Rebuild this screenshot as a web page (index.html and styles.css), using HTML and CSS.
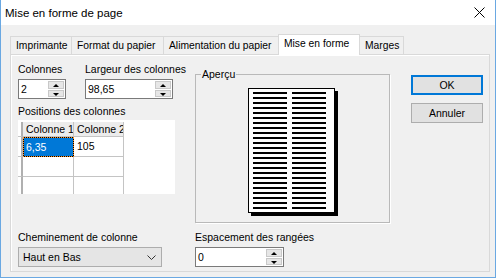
FILE: index.html
```html
<!DOCTYPE html>
<html lang="fr">
<head>
  <meta charset="UTF-8">
  <title>Mise en forme de page</title>
  <link rel="stylesheet" href="styles.css">
</head>
<body>

<div class="window">
  <div class="titlebar">
    <span class="title">Mise en forme de page</span>
    <svg class="close" width="11" height="11" viewBox="0 0 11 11">
      <path d="M0.5 0.5 L10.5 10.5 M10.5 0.5 L0.5 10.5" stroke="#000" stroke-width="1" fill="none"/>
    </svg>
  </div>

  <div class="client">
    <div class="tabs">
      <div class="tab tab-imprimante">Imprimante</div>
      <div class="tab tab-format">Format du papier</div>
      <div class="tab tab-alim">Alimentation du papier</div>
      <div class="tab tab-mise active">Mise en forme</div>
      <div class="tab tab-marges">Marges</div>
    </div>

    <div class="panel">
      <!-- colonne gauche -->
      <div class="col-left">
        <div class="field-row">
          <div class="field">
            <div class="label">Colonnes</div>
            <div class="spinner spin-cols">
              <span class="value">2</span>
              <div class="spin-btns"><span class="up"></span><span class="down"></span></div>
            </div>
          </div>
          <div class="field">
            <div class="label">Largeur des colonnes</div>
            <div class="spinner spin-width">
              <span class="value">98,65</span>
              <div class="spin-btns"><span class="up"></span><span class="down"></span></div>
            </div>
          </div>
        </div>

        <div class="label label-positions">Positions des colonnes</div>
        <div class="grid-box">
          <div class="grid-table">
            <div class="corner"></div>
            <div class="head">Colonne 1</div>
            <div class="head">Colonne 2</div>

            <div class="rowhead"></div>
            <div class="cell selected">6,35</div>
            <div class="cell">105</div>

            <div class="rowhead"></div>
            <div class="cell"></div>
            <div class="cell"></div>

            <div class="rowhead"></div>
            <div class="cell"></div>
            <div class="cell"></div>
          </div>
        </div>
      </div>

      <!-- aperçu -->
      <fieldset class="preview">
        <legend>Aperçu</legend>
        <svg class="page" width="90" height="128" viewBox="0 0 90 128" shape-rendering="crispEdges">
          <defs>
            <pattern id="rows" x="0" y="4" width="5" height="5" patternUnits="userSpaceOnUse">
              <rect x="0" y="0" width="5" height="2" fill="#000"/>
            </pattern>
          </defs>
          <rect x="3" y="3" width="87" height="125" fill="#000"/>
          <rect x="0.5" y="0.5" width="86" height="124" fill="#fff" stroke="#000"/>
          <rect x="5" y="4" width="34" height="120" fill="url(#rows)"/>
          <rect x="44" y="4" width="34" height="120" fill="url(#rows)"/>
        </svg>
      </fieldset>

      <!-- boutons -->
      <div class="buttons">
        <div class="btn btn-default">OK</div>
        <div class="btn">Annuler</div>
      </div>

      <div class="field">
        <div class="label">Cheminement de colonne</div>
        <div class="combo">
          <span class="value">Haut en Bas</span>
          <svg class="chevron" width="9" height="5" viewBox="0 0 9 5">
            <path d="M0.5 0.5 L4.5 4.5 L8.5 0.5" stroke="#333" fill="none"/>
          </svg>
        </div>
      </div>

      <div class="field">
        <div class="label">Espacement des rangées</div>
        <div class="spinner spin-space">
          <span class="value">0</span>
          <div class="spin-btns"><span class="up"></span><span class="down"></span></div>
        </div>
      </div>
    </div>
  </div>
</div>

</body>
</html>
```

FILE: styles.css
```css
/* Fenêtre */
body {
  margin: 0;
  background: #f0f0f0;
  font-family: "Liberation Sans", Arial, sans-serif;
  font-size: 10.5px;
  color: #000;
}
.window {
  width: 496px;
  height: 278px;
  box-sizing: border-box;
  border: 1px solid #6aa8e2;
  border-top: 0;
  background: #f0f0f0;
  overflow: hidden;
}
.titlebar {
  height: 25px;
  background: #fff;
  display: flex;
  align-items: center;
  padding-left: 4px;
  padding-right: 10px;
}
.title {
  font-size: 11.5px;
  flex: 1;
}
.close {
  display: block;
}

/* Onglets */
.client {
  padding: 9px 5px 0 9px;
}
.tabs {
  display: flex;
  align-items: flex-end;
  height: 21px;
  margin-bottom: -1px;
  position: relative;
  z-index: 1;
}
.tab {
  box-sizing: border-box;
  height: 18px;
  margin-bottom: 1px;
  margin-left: -1px;
  border: 1px solid #d9d9d9;
  border-bottom: 0;
  background: #f0f0f0;
  font-size: 10.3px;
  line-height: 17px;
  padding-left: 5px;
  white-space: nowrap;
}
.tab-imprimante { width: 62px; margin-left: 0; }
.tab-format { width: 93px; }
.tab-alim { width: 116px; }
.tab-mise { width: 82px; }
.tab-marges { width: 45px; }
.tab.active {
  height: 21px;
  margin-bottom: 0;
  background: #fff;
  line-height: 17px;
}

/* Panneau */
.panel {
  box-sizing: border-box;
  width: 480px;
  height: 218px;
  border: 1px solid #d9d9d9;
  box-shadow: inset 1px 1px 0 #fff;
  padding: 8px 0 0 7px;
  display: grid;
  grid-template-columns: 157px 195px 73px;
  grid-template-rows: 160px auto;
  column-gap: 20px;
  row-gap: 8px;
}
.label {
  line-height: 13px;
  white-space: nowrap;
}
.field-row {
  display: flex;
  gap: 19px;
}
.label-positions {
  margin-top: 6px;
}

/* Zones de saisie */
.spinner {
  box-sizing: border-box;
  height: 20px;
  margin-top: 3px;
  border: 1px solid #7a7a7a;
  background: #fff;
  display: flex;
  align-items: center;
}
.spinner .value {
  flex: 1;
  padding-left: 2px;
}
.spin-cols { width: 48px; }
.spin-width { width: 88px; }
.spin-space { width: 89px; }
.spin-btns {
  width: 16px;
  height: 16px;
  margin-right: 1px;
  display: flex;
  flex-direction: column;
  gap: 1px;
}
.spin-btns span {
  flex: 1;
  background: #e6e6e6;
  border: 1px solid #c8c8c8;
  position: relative;
}
.spin-btns span::after {
  content: "";
  position: absolute;
  left: 4px;
  top: 2px;
  border-left: 3px solid transparent;
  border-right: 3px solid transparent;
}
.spin-btns .up::after { border-bottom: 3px solid #000; }
.spin-btns .down::after { border-top: 3px solid #000; }

/* Grille des positions */
.grid-box {
  width: 157px;
  height: 74px;
  margin-top: 2px;
  background: #fff;
  overflow: hidden;
  padding-top: 2px;
  box-sizing: border-box;
}
.grid-table {
  display: grid;
  grid-template-columns: 5px 51px 50px;
  grid-template-rows: 15px 20px 20px 20px;
}
.grid-table > div {
  box-sizing: border-box;
  border-right: 1px solid #c4c4c4;
  border-bottom: 1px solid #c4c4c4;
  overflow: hidden;
  white-space: nowrap;
  line-height: 18px;
}
.grid-table > .corner,
.grid-table > .rowhead {
  background: #fff;
  border-right: 2px solid #b0b0b0;
}
.grid-table > .head {
  background: #ececec;
  line-height: 14px;
  padding-left: 3px;
}
.cell {
  padding-left: 3px;
}
.grid-table > .cell.selected {
  background: #0078d7;
  color: #fff;
  border: 1px solid #000;
  outline: 1px dotted #ff9020;
  outline-offset: -1px;
  padding-left: 2px;
}

/* Aperçu */
.preview {
  margin: 5px 0 0;
  padding: 0;
  min-width: 0;
  height: 155px;
  box-sizing: border-box;
  border: 1px solid #b9b9b9;
  box-shadow: 1px 1px 0 #fff;
}
.preview legend {
  margin-left: 5px;
  padding: 0 1px;
  line-height: 13px;
}
.page {
  display: block;
  margin: 7px 0 0 52px;
}

/* Boutons */
.buttons {
  margin-left: 1px;
  margin-top: 12px;
  display: flex;
  flex-direction: column;
  gap: 8px;
}
.btn {
  box-sizing: border-box;
  height: 20px;
  border: 1px solid #adadad;
  background: #e1e1e1;
  text-align: center;
  line-height: 18px;
}
.btn-default {
  border: 2px solid #0078d7;
  line-height: 16px;
}

/* Liste déroulante */
.combo {
  box-sizing: border-box;
  width: 144px;
  height: 20px;
  margin-top: 3px;
  border: 1px solid #adadad;
  background: #e5e5e5;
  display: flex;
  align-items: center;
  padding: 0 5px 0 4px;
}
.combo .value {
  flex: 1;
}
```
